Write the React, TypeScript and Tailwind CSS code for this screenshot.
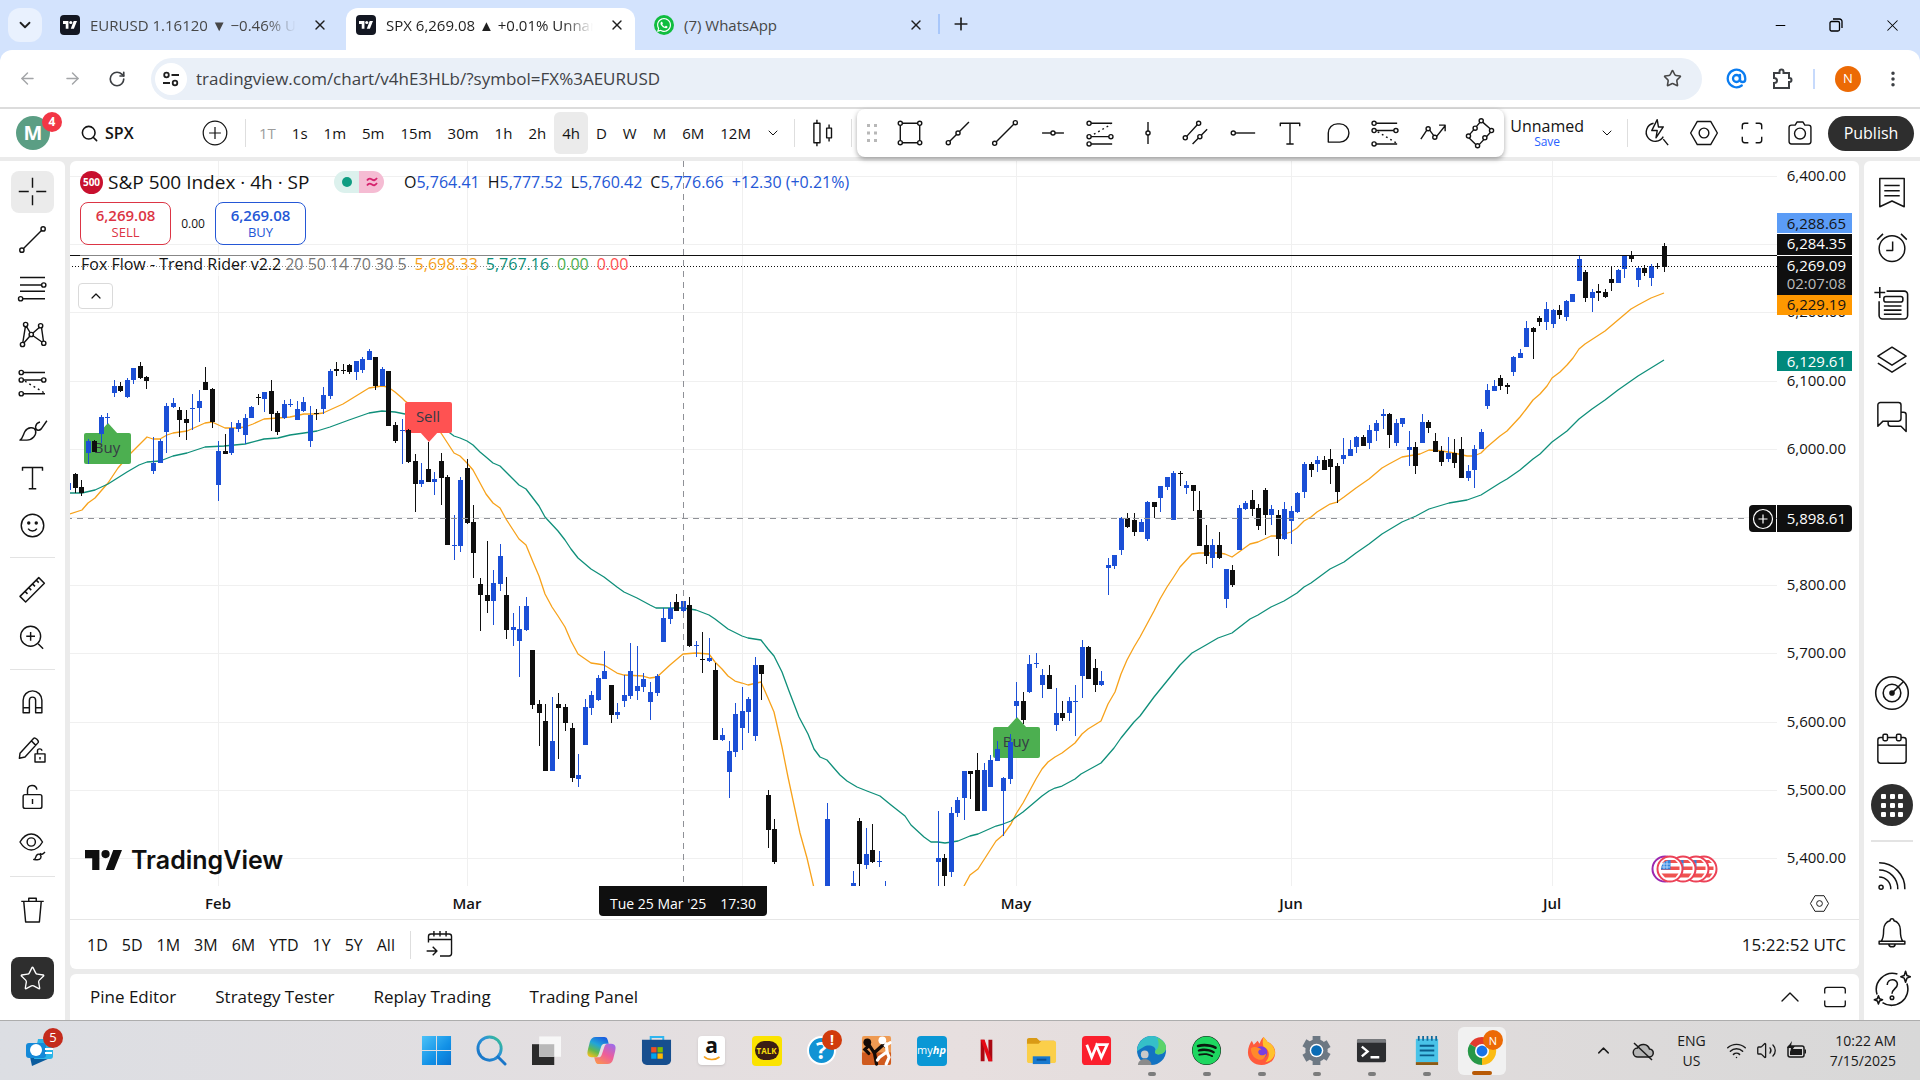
import React from "react";
import {
  ArrowLeft,
  ArrowRight,
  RotateCw,
  X,
  Plus,
  Minus,
  ChevronDown,
  ChevronUp,
  Star,
  AtSign,
  EllipsisVertical,
  Search,
  Wifi,
  Volume2,
} from "lucide-react";
import { FaWhatsapp, FaSpotify } from "react-icons/fa";

type Candle = [high: number, top: number, bottom: number, low: number, up: 0 | 1];

const FIRST_X = 75;
const STEP = 6.54;

/* Candle runs keyed by the index of their first bar. */
const runs: { start: number; bars: Candle[] }[] = [
  {
    start: -1,
    bars: [
      [480, 483, 490, 493, 1], [473, 474, 488, 493, 0], [480, 487, 493, 496, 0], [439, 441, 453, 464, 1],
      [440, 441, 452, 452, 0], [415, 417, 434, 443, 1], [413, 417, 418, 424, 1], [380, 386, 393, 397, 1],
      [382, 386, 391, 392, 0], [378, 380, 397, 398, 1], [368, 368, 380, 384, 1], [362, 366, 378, 379, 0],
      [376, 377, 381, 389, 0], [437, 463, 471, 474, 1], [439, 441, 463, 463, 1], [403, 406, 432, 453, 1],
      [398, 403, 407, 408, 1], [407, 410, 420, 437, 0], [410, 419, 423, 440, 0], [394, 408, 409, 430, 1],
      [390, 401, 408, 422, 1], [367, 382, 390, 390, 0], [388, 389, 422, 428, 0], [441, 451, 485, 501, 1],
      [434, 451, 454, 454, 0], [422, 428, 453, 455, 1], [420, 423, 429, 432, 1], [414, 418, 435, 444, 1],
      [406, 407, 418, 418, 1], [394, 397, 398, 405, 0], [392, 392, 399, 412, 1], [380, 391, 414, 431, 0],
      [411, 413, 432, 435, 0], [400, 404, 418, 419, 1], [399, 404, 405, 407, 1], [401, 409, 420, 420, 1],
      [397, 402, 411, 412, 1], [406, 415, 441, 447, 1], [409, 413, 414, 420, 0], [387, 395, 409, 414, 1],
      [369, 371, 396, 399, 1], [362, 369, 371, 376, 0], [364, 370, 371, 374, 0], [364, 365, 372, 374, 0],
      [361, 361, 372, 380, 1], [357, 359, 370, 373, 1], [349, 351, 360, 360, 1], [357, 357, 386, 390, 0],
      [367, 369, 386, 386, 1], [371, 371, 426, 426, 0], [422, 425, 441, 443, 0], [419, 430, 431, 464, 1],
      [429, 430, 462, 463, 0], [454, 461, 484, 512, 0], [463, 480, 484, 487, 1], [442, 469, 482, 482, 0],
      [472, 479, 482, 495, 1], [453, 461, 478, 505, 0], [475, 477, 545, 545, 0], [515, 545, 546, 560, 1],
      [477, 480, 546, 552, 1], [459, 468, 523, 524, 0], [505, 522, 553, 578, 0], [578, 584, 595, 631, 0],
      [541, 595, 601, 613, 0], [570, 583, 601, 625, 1], [544, 556, 584, 591, 1], [577, 595, 630, 639, 0],
      [613, 627, 630, 646, 1], [606, 629, 641, 677, 1], [597, 606, 630, 631, 1], [650, 650, 705, 709, 0],
      [700, 704, 713, 746, 0], [704, 721, 771, 771, 0], [697, 741, 771, 771, 1], [693, 704, 708, 759, 0],
      [704, 707, 723, 731, 0], [723, 728, 778, 782, 0], [754, 775, 779, 787, 1], [699, 707, 745, 745, 1],
      [691, 695, 708, 715, 1], [675, 678, 700, 701, 1], [651, 671, 679, 679, 1], [685, 685, 715, 723, 0],
      [703, 712, 715, 719, 1], [675, 695, 701, 707, 1], [643, 671, 696, 699, 1], [646, 686, 691, 700, 1],
      [673, 679, 687, 692, 1], [682, 692, 702, 720, 1], [674, 676, 693, 696, 1], [608, 618, 642, 642, 1],
      [602, 608, 619, 624, 1], [594, 602, 611, 611, 0], [601, 601, 611, 612, 1], [597, 605, 646, 647, 0],
      [641, 645, 646, 657, 1], [632, 659, 660, 673, 0], [638, 658, 661, 662, 1], [663, 670, 740, 740, 0],
      [728, 735, 740, 741, 1], [741, 751, 772, 798, 1], [703, 714, 752, 757, 1], [687, 711, 728, 750, 1],
      [697, 699, 712, 733, 1], [657, 665, 736, 741, 1], [665, 665, 674, 700, 0], [790, 795, 830, 848, 0],
      [819, 829, 862, 864, 0],
    ],
  },
  { start: 115, bars: [[803, 819, 890, 890, 1]] },
  {
    start: 119,
    bars: [
      [871, 883, 890, 890, 1], [818, 821, 864, 890, 0], [828, 854, 865, 869, 1], [824, 850, 862, 863, 0],
      [851, 861, 862, 867, 1], [881, 889, 890, 890, 1],
    ],
  },
  {
    start: 132,
    bars: [
      [811, 858, 862, 890, 1], [854, 858, 876, 890, 0], [807, 813, 872, 877, 1], [797, 800, 813, 817, 1],
      [771, 771, 798, 820, 1], [771, 771, 774, 799, 0], [753, 770, 811, 811, 0], [763, 770, 811, 811, 1],
      [755, 760, 787, 787, 1], [741, 749, 761, 761, 1], [777, 778, 791, 836, 1], [734, 742, 779, 784, 1],
      [682, 701, 706, 718, 1], [692, 701, 720, 724, 0], [655, 664, 692, 693, 1], [653, 663, 664, 668, 1],
      [669, 675, 685, 698, 1], [665, 675, 689, 689, 0], [688, 713, 725, 731, 1], [701, 713, 718, 721, 0],
      [697, 701, 713, 721, 1], [685, 701, 702, 736, 1], [640, 647, 676, 698, 1], [646, 647, 679, 679, 0],
      [659, 668, 685, 692, 0], [671, 681, 685, 686, 1], [558, 565, 568, 595, 1], [555, 555, 566, 569, 1],
      [517, 518, 550, 555, 1], [513, 518, 527, 528, 0], [513, 520, 532, 536, 0], [519, 522, 532, 532, 1],
      [501, 502, 539, 541, 1], [502, 502, 507, 518, 0], [486, 486, 498, 512, 1], [477, 477, 487, 490, 1],
      [471, 473, 520, 520, 1], [471, 473, 474, 486, 0], [481, 485, 488, 494, 1], [485, 485, 491, 511, 0],
      [491, 510, 546, 546, 0], [525, 545, 556, 564, 0], [539, 545, 558, 568, 1], [532, 545, 558, 559, 0],
      [569, 569, 599, 608, 1], [565, 570, 585, 587, 0], [505, 508, 550, 550, 1], [501, 503, 509, 510, 1],
      [490, 500, 509, 516, 0], [504, 508, 526, 530, 0], [488, 490, 515, 535, 0], [505, 509, 515, 525, 1],
      [510, 515, 539, 556, 0], [502, 509, 539, 540, 1], [506, 511, 521, 544, 1], [492, 493, 512, 513, 1],
      [462, 464, 492, 498, 1], [462, 464, 470, 477, 0], [456, 460, 464, 472, 1], [456, 460, 470, 470, 0],
      [449, 459, 467, 484, 0], [463, 466, 492, 503, 0], [438, 455, 459, 464, 1], [440, 449, 456, 456, 1],
      [436, 437, 447, 453, 1], [435, 437, 446, 446, 0], [425, 430, 443, 449, 1], [420, 423, 431, 441, 1],
      [409, 414, 416, 429, 1], [413, 414, 435, 448, 0], [419, 423, 443, 446, 1], [418, 418, 424, 427, 1],
      [431, 447, 450, 466, 1], [442, 447, 466, 474, 0], [414, 422, 443, 443, 1], [420, 422, 428, 433, 0],
      [433, 441, 452, 452, 0], [446, 451, 462, 466, 0], [437, 453, 459, 462, 1], [439, 453, 463, 468, 0],
      [437, 449, 478, 478, 0], [465, 471, 478, 481, 1], [445, 449, 470, 488, 1], [429, 432, 449, 449, 1],
      [384, 390, 406, 409, 1], [380, 386, 391, 391, 1], [375, 378, 386, 390, 0], [383, 385, 387, 394, 0],
      [356, 357, 372, 376, 1], [349, 353, 358, 358, 1], [321, 328, 347, 347, 1], [327, 328, 332, 359, 0],
      [316, 318, 322, 326, 0], [302, 309, 322, 330, 1], [309, 310, 324, 328, 1], [305, 310, 315, 319, 0],
      [300, 301, 317, 321, 1], [294, 294, 302, 302, 1], [256, 259, 281, 281, 1], [270, 272, 298, 302, 0],
      [289, 292, 298, 312, 1], [284, 291, 293, 301, 0], [289, 292, 297, 298, 0], [266, 279, 283, 291, 0],
      [269, 270, 283, 283, 1], [255, 256, 269, 278, 1], [251, 256, 259, 262, 0], [267, 268, 280, 287, 1],
      [265, 268, 273, 276, 0], [264, 266, 278, 286, 1], [263, 266, 267, 269, 0], [243, 246, 267, 272, 0],
    ],
  },
];

const fastLine =
  "70,514 82,510 88,503 95,498 101,491 108,483 118,468 131,453 139,445 147,437 153,439 160,439 167,435 173,433 187,431 196,427 205,423 212,422 225,428 237,428 245,427 253,424 264,419 278,418 290,417 304,414 316,414 323,413 343,404 356,396 369,388 382,386 388,387 395,392 402,398 405,401 425,415 441,433 454,453 460,456 467,463 473,470 486,494 493,503 500,508 506,519 519,539 526,545 533,562 539,576 545,594 552,607 558,616 565,627 571,641 578,654 591,663 598,664 604,665 617,673 624,675 643,676 650,678 657,677 670,665 683,654 696,653 709,654 715,662 722,669 728,676 735,681 742,683 748,685 761,682 768,698 774,712 782,747 788,777 800,833 807,858 814,888";
const fastLineReturn =
  "963,888 970,875 978,869 996,841 1003,835 1011,824 1016,814 1023,803 1029,792 1036,779 1042,769 1048,762 1055,757 1062,753 1075,743 1082,734 1088,729 1101,721 1108,704 1115,692 1121,674 1127,660 1134,647 1140,637 1147,624 1154,611 1160,599 1167,587 1173,578 1180,567 1192,554 1199,553 1219,553 1225,554 1232,557 1239,552 1250,544 1258,542 1271,536 1278,536 1291,532 1297,528 1304,521 1311,517 1317,512 1330,504 1337,502 1344,497 1356,488 1369,479 1382,468 1389,464 1402,457 1420,454 1429,450 1442,451 1454,453 1467,456 1474,456 1481,453 1487,447 1500,436 1507,431 1520,417 1527,408 1533,400 1540,394 1547,386 1552,378 1560,372 1567,365 1573,358 1579,349 1585,344 1605,331 1618,320 1631,309 1638,305 1651,298 1664,293";
const slowLine =
  "70,493 82,493 95,490 108,484 127,472 139,465 147,462 160,461 173,456 187,453 205,447 224,446 245,444 264,439 278,438 290,435 304,433 317,431 330,427 349,420 369,413 382,411 395,412 405,414 430,424 450,433 454,436 460,438 467,441 473,445 480,452 486,457 493,463 500,466 513,479 519,485 526,489 539,506 545,517 558,531 565,540 571,549 578,558 591,569 604,577 617,587 624,592 637,598 650,605 656,608 683,608 696,610 709,615 715,619 728,629 742,636 748,638 761,640 768,649 774,656 782,672 789,691 799,717 808,734 814,749 820,757 827,760 833,767 840,775 847,781 857,787 867,791 880,796 891,805 905,816 911,825 924,837 931,842 938,842 945,843 958,841 970,836 978,834 996,826 1003,824 1011,821 1016,817 1023,812 1029,807 1042,796 1049,791 1055,788 1062,786 1075,779 1081,774 1101,763 1114,748 1121,738 1134,722 1140,716 1154,697 1167,681 1180,665 1192,653 1206,645 1218,638 1232,633 1250,619 1258,615 1271,607 1284,601 1297,593 1304,587 1311,583 1330,569 1344,562 1356,553 1369,544 1382,534 1402,522 1416,516 1429,509 1449,503 1467,500 1481,495 1500,483 1507,479 1520,470 1533,459 1540,454 1552,442 1567,431 1579,419 1592,409 1605,400 1618,390 1638,376 1651,368 1664,360";

const gridX = [218, 467, 742, 1016, 1291, 1552];
const prices = [6400, 6300, 6200, 6100, 6000, 5900, 5800, 5700, 5600, 5500, 5400];
const priceY = (p: number) => Math.round(176 + (6400 - p) * 0.682);

function Signal({ x, y, text, up }: { x: number; y: number; text: string; up: boolean }) {
  const top = up ? y + 10 : y - 40;
  return (
    <g>
      <rect x={x - 24} y={top} width={47} height={31} rx={2} fill={up ? "#4caf50" : "#ff5252"} />
      <path
        d={up ? `M${x} ${y} l10 11 h-20 z` : `M${x} ${y} l10 -11 h-20 z`}
        fill={up ? "#4caf50" : "#ff5252"}
      />
      <text x={x - 1} y={top + 20} textAnchor="middle" fontSize={15} fill="#363a45">
        {text}
      </text>
    </g>
  );
}

function Chart() {
  return (
    <svg
      viewBox="70 161 1707 725"
      preserveAspectRatio="xMaxYMin slice"
      className="block h-full w-full"
      role="img"
      aria-label="S&P 500 Index candles"
    >
      <g stroke="#f0f0f0" shapeRendering="crispEdges">
        {gridX.map((x) => (
          <line key={x} x1={x + 0.5} x2={x + 0.5} y1={161} y2={886} />
        ))}
        {prices.map((p) => (
          <line key={p} x1={0} x2={1777} y1={priceY(p) + 0.5} y2={priceY(p) + 0.5} />
        ))}
      </g>
      <g fill="none" strokeWidth={1.3} strokeLinejoin="round">
        <polyline points={fastLine} stroke="#f7a21b" />
        <polyline points={fastLineReturn} stroke="#f7a21b" />
        <polyline points={slowLine} stroke="#0f8f7a" />
      </g>
      <Signal x={108} y={423} text="Buy" up />
      <Signal x={429} y={442} text="Sell" up={false} />
      <Signal x={1017} y={717} text="Buy" up />
      <g shapeRendering="crispEdges">
        {runs.map((run) =>
          run.bars.map(([h, t, b, l, up], k) => {
            const x = Math.floor(FIRST_X + STEP * (run.start + k));
            const c = up ? "#1b4fd6" : "#0f0f0f";
            return (
              <g key={run.start + k} fill={c}>
                <rect x={x} y={h} width={1} height={Math.max(1, l - h)} />
                <rect x={x - 2} y={t} width={5} height={Math.max(1, b - t)} />
              </g>
            );
          }),
        )}
      </g>
      <g shapeRendering="crispEdges" stroke="#0f0f0f">
        <line x1={0} x2={1777} y1={255.5} y2={255.5} />
        <line x1={0} x2={1777} y1={266.5} y2={266.5} strokeDasharray="1 2" />
        <line x1={683.5} x2={683.5} y1={161} y2={886} stroke="#8f9197" strokeDasharray="6 5" />
        <line x1={0} x2={1777} y1={518.5} y2={518.5} stroke="#8f9197" strokeDasharray="6 5" />
      </g>
    </svg>
  );
}

/* Thin-stroke icon on a 28-unit grid. */
function Icon({ size = 34, children }: { size?: number; children: React.ReactNode }) {
  return (
    <svg
      width={size}
      height={size}
      viewBox="0 0 28 28"
      fill="none"
      stroke="#131313"
      strokeWidth={1.15}
      strokeLinejoin="round"
      className="shrink-0"
      aria-hidden="true"
    >
      {children}
    </svg>
  );
}

const Dot = ({ x, y }: { x: number; y: number }) => <circle cx={x} cy={y} r={1.7} fill="#fff" />;

const trend = (
  <>
    <path d="M6 22 22 6" />
    <Dot x={5.5} y={22.5} />
    <Dot x={22.5} y={5.5} />
  </>
);
const fibo = (
  <>
    <path d="M4 6h20M4 12h20M4 17h20M4 23h20" />
    <Dot x={23} y={12} />
    <Dot x={4.5} y={23} />
  </>
);
const pattern = (
  <>
    <path d="M6 22 8.5 6.5 13 14 21 7 23 21 13 14 6 22" />
    <Dot x={6} y={22} />
    <Dot x={8.5} y={6} />
    <Dot x={13} y={14} />
    <Dot x={20.5} y={7} />
    <Dot x={23} y={21} />
  </>
);
const position = (
  <>
    <path d="M6 6h18M6 12h17M6 23h18" />
    <path d="M8 13 23 22" strokeDasharray="1.5 2.5" />
    <Dot x={5} y={6} />
    <Dot x={5} y={12} />
    <Dot x={23} y={12} />
    <Dot x={5} y={23} />
  </>
);
const positionUp = (
  <>
    <path d="M6 6h18M6 17h17M6 23h18" />
    <path d="M9 15 23 7" strokeDasharray="1.5 2.5" />
    <Dot x={5} y={6} />
    <Dot x={5} y={17} />
    <Dot x={23} y={17} />
    <Dot x={5} y={23} />
  </>
);
const textTool = <path d="M6 8.5V6h16v2.5M14 6v17M11 23h6" />;

const leftGroups: { height: string; tools: { name: string; icon: React.ReactNode }[] }[] = [
  {
    height: "h-[381px]",
    tools: [
      { name: "Cross", icon: <path d="M14 3v8M14 17v8M3 14h8M17 14h8" /> },
      { name: "Trend line", icon: trend },
      { name: "Fib retracement", icon: fibo },
      { name: "XABCD pattern", icon: pattern },
      { name: "Long position", icon: position },
      {
        name: "Brush",
        icon: (
          <path d="M4 22.500c2.500-1.500 2.500-4.500 4-7 2-3.500 7.500-4 8.500-.5.8 3.500-2.500 7.500-7 7.500zM16.500 11.500c-.5 3 2.500 4 4.500 2L25.500 7M16.500 11.500c.3-1.500 1.500-3 3.500-3.500" />
        ),
      },
      { name: "Text", icon: textTool },
      {
        name: "Icon",
        icon: (
          <>
            <circle cx={14} cy={14} r={9} />
            <circle cx={11} cy={12} r={0.8} fill="#131313" />
            <circle cx={17} cy={12} r={0.8} fill="#131313" />
            <path d="M10.5 16.500c1.500 2.500 5.500 2.500 7 0" />
          </>
        ),
      },
    ],
  },
  {
    height: "h-[95px]",
    tools: [
      {
        name: "Measure",
        icon: <path d="m4 19.500 15-15 4.500 4.500-15 15zM8 15.500l2 2M11 12.500l2 2M14 9.500l2 2M17 6.500l2 2" />,
      },
      {
        name: "Zoom in",
        icon: (
          <>
            <circle cx={12.5} cy={13} r={8} />
            <path d="M12.500 9.500v7M9 13h7M18.500 19l4 4" />
          </>
        ),
      },
    ],
  },
  {
    height: "h-[190px]",
    tools: [
      {
        name: "Magnet",
        icon: <path d="M6.500 23V13a7.500 7.500 0 0 1 15 0v10h-5V13a2.500 2.500 0 0 0-5 0v10zM6.500 19h5M16.500 19h5" />,
      },
      {
        name: "Keep drawing",
        icon: (
          <path d="m4 17 11-12c1-1 4.500 2 3.500 3.500L8 20l-4.500 1zM13 7l3.500 3.500M16 17.500h8V24h-8zM18 17.500V15c0-2 3.500-2 3.500 0M20 20v2" />
        ),
      },
      {
        name: "Lock",
        icon: (
          <>
            <rect x={6.5} y={12.5} width={15} height={11} rx={1.5} />
            <path d="M10 12.500V9c0-5 7-5 7.500-.5M14 16v4" />
          </>
        ),
      },
      {
        name: "Hide",
        icon: (
          <>
            <path d="M4 12c5-8.500 13-8.500 18 0-5 8.500-13 8.500-18 0Z" />
            <circle cx={13} cy={12} r={3.3} />
            <path d="M15 26c2 0 1-3 3-4s3.500 1 2.500 3-3 1-5.500 1ZM20 21c1 1.500 2 1 4-1" />
          </>
        ),
      },
    ],
  },
  {
    height: "h-12",
    tools: [
      {
        name: "Remove",
        icon: <path d="M5 7.500h18M11 7.500V5h6v2.500M7 7.500 8.500 24h11L21 7.500" />,
      },
    ],
  },
];

const drawTools: { name: string; icon: React.ReactNode }[] = [
  {
    name: "Rectangle",
    icon: (
      <>
        <path d="M6 6h16v16H6z" />
        <Dot x={6} y={6} />
        <Dot x={22} y={6} />
        <Dot x={6} y={22} />
        <Dot x={22} y={22} />
      </>
    ),
  },
  {
    name: "Ray",
    icon: (
      <>
        <path d="M6 22 23 5" />
        <Dot x={6} y={22} />
        <Dot x={14} y={14} />
      </>
    ),
  },
  { name: "Line", icon: trend },
  {
    name: "Horizontal line",
    icon: (
      <>
        <path d="M5 14h18" />
        <Dot x={14} y={14} />
      </>
    ),
  },
  { name: "Short position", icon: positionUp },
  {
    name: "Vertical line",
    icon: (
      <>
        <path d="M14 5v18" />
        <Dot x={14} y={14} />
      </>
    ),
  },
  {
    name: "Parallel channel",
    icon: (
      <>
        <path d="M6 18 17 6M12 23 24 11" />
        <Dot x={6} y={18} />
        <Dot x={17} y={6} />
        <Dot x={18} y={17} />
      </>
    ),
  },
  {
    name: "Horizontal ray",
    icon: (
      <>
        <path d="M6 14h18" />
        <Dot x={6} y={14} />
      </>
    ),
  },
  { name: "Text", icon: textTool },
  {
    name: "Callout",
    icon: <path d="M6 21.500V14a7.500 7.500 0 0 1 7.500-7.500h2a7.500 7.500 0 0 1 0 15z" />,
  },
  { name: "Long position", icon: position },
  {
    name: "Path",
    icon: (
      <>
        <path d="m4 19 6-9 6 8 8-10M19 7.500h5v5" />
        <Dot x={10} y={10.5} />
        <Dot x={15.5} y={17.5} />
      </>
    ),
  },
  {
    name: "Rotated rectangle",
    icon: (
      <>
        <path d="M15 4 24 12 12 25 4 17z" />
        <Dot x={15} y={4} />
        <Dot x={23.5} y={12} />
        <Dot x={12} y={24.5} />
        <Dot x={4.5} y={16.5} />
        <Dot x={10} y={10} />
        <Dot x={18} y={18} />
      </>
    ),
  },
];

function TvMark({ className, light }: { className: string; light?: boolean }) {
  return (
    <svg viewBox="0 0 36 20" className={className} fill={light ? "#fff" : "#0f0f0f"} aria-hidden="true">
      <path d="M14 20H7V8H0V0h14zM28 20h-8l7.500-20H36z" />
      <circle cx={20} cy={4} r={4} />
    </svg>
  );
}

function Tab({ active, icon, title, fade }: { active?: boolean; icon: React.ReactNode; title: string; fade?: boolean }) {
  return (
    <div
      className={`flex h-[42px] items-center pb-2 pl-[10px] ${
        active ? "w-[289px] rounded-t-xl bg-white pr-2" : fade ? "w-[296px] pr-4" : "w-[290px] pr-2"
      }`}
    >
      {icon}
      <span
        className={`ml-[10px] min-w-0 flex-1 overflow-hidden whitespace-nowrap text-[15px] ${
          active ? "text-[#1f1f1f]" : "text-[#474747]"
        } ${fade ? "[mask-image:linear-gradient(to_right,black_85%,transparent)]" : ""}`}
      >
        {title}
      </span>
      <button aria-label={`Close ${title}`} className="ml-[14px] p-0.5">
        <X size={16} strokeWidth={2} color="#1f1f1f" />
      </button>
    </div>
  );
}

const TvFavicon = () => (
  <span className="grid h-5 w-5 shrink-0 place-items-center rounded bg-[#131722]">
    <TvMark light className="w-[14px]" />
  </span>
);

function BrowserChrome() {
  return (
    <header className="font-['Open_Sans','Noto_Sans',sans-serif]">
      <div className="flex h-[50px] items-end bg-[#d3e3fd]">
        <button
          aria-label="Search tabs"
          className="mb-2 ml-2 grid h-[34px] w-[34px] place-items-center rounded-xl bg-[#e9f1fe]"
        >
          <ChevronDown size={18} strokeWidth={2.4} color="#1f1f1f" />
        </button>
        <div className="ml-2 flex">
          <Tab fade icon={<TvFavicon />} title="EURUSD 1.16120 ▼ −0.46% Unnamed" />
          <Tab active fade icon={<TvFavicon />} title="SPX 6,269.08 ▲ +0.01% Unnamed" />
          <div className="ml-[9px]">
            <Tab
              icon={
                <span className="grid h-5 w-5 place-items-center rounded-full bg-[#10bd3f]">
                  <FaWhatsapp size={16} color="#fff" />
                </span>
              }
              title="(7) WhatsApp"
            />
          </div>
        </div>
        <span className="mb-4 ml-1 h-5 w-0.5 bg-[#a8c7fa]" />
        <button aria-label="New tab" className="mb-4 ml-[11px]">
          <Plus size={20} color="#1f1f1f" />
        </button>
        <div className="ml-auto flex h-full items-center">
          <button aria-label="Minimize" className="grid w-14 place-items-center">
            <Minus size={15} strokeWidth={1.6} color="#000" />
          </button>
          <button aria-label="Restore" className="grid w-14 place-items-center">
            <svg width="14" height="14" viewBox="0 0 14 14" fill="none" stroke="#000" strokeWidth="1.3">
              <rect x="1" y="3.5" width="9.5" height="9.5" rx="1.5" />
              <path d="M4 1h6.500A2.500 2.500 0 0 1 13 3.500V10" />
            </svg>
          </button>
          <button aria-label="Close window" className="grid w-14 place-items-center">
            <X size={19} strokeWidth={1.3} color="#000" />
          </button>
        </div>
      </div>
      <div className="bg-[#d3e3fd]">
        <div className="flex h-[59px] items-center rounded-t-xl border-b-2 border-[#dcdcdc] bg-white">
          <button aria-label="Back" className="ml-[18px]">
            <ArrowLeft size={19} strokeWidth={1.8} color="#a3a5a8" />
          </button>
          <button aria-label="Forward" className="ml-[26px]">
            <ArrowRight size={19} strokeWidth={1.8} color="#a3a5a8" />
          </button>
          <button aria-label="Reload" className="ml-[26px]">
            <RotateCw size={18} strokeWidth={2.2} color="#3c3f43" />
          </button>
          <div className="ml-[25px] flex h-[42px] flex-1 items-center rounded-full bg-[#eaf0f8] pl-1 pr-5">
            <button aria-label="Site information" className="grid h-8 w-8 place-items-center rounded-full bg-white">
              <svg width="18" height="18" viewBox="0 0 18 18" fill="none" stroke="#1f1f1f" strokeWidth="1.8">
                <circle cx="4.5" cy="5" r="2.3" />
                <path d="M9.500 5H17M1 13h7" />
                <circle cx="13" cy="13" r="2.3" />
              </svg>
            </button>
            <input
              aria-label="Address"
              className="ml-[9px] flex-1 bg-transparent text-[17px] text-[#3f4246] outline-none"
              defaultValue="tradingview.com/chart/v4hE3HLb/?symbol=FX%3AEURUSD"
            />
            <button aria-label="Bookmark">
              <Star size={19} strokeWidth={2} color="#474747" />
            </button>
          </div>
          <button aria-label="Mail" className="ml-6">
            <AtSign size={21} strokeWidth={2.6} color="#0a7cf0" />
          </button>
          <button aria-label="Extensions" className="ml-6">
            <svg width="22" height="22" viewBox="0 0 22 22" fill="none" stroke="#3c3f43" strokeWidth="2">
              <path d="M3 5h5.500V3.500a2 2 0 0 1 4 0V5H18v5h.5a2 2 0 0 1 0 4H18v6H3v-5c4 0 4-5 0-5z" />
            </svg>
          </button>
          <span className="ml-[20px] h-5 w-0.5 bg-[#c7dafc]" />
          <button
            aria-label="Profile"
            className="ml-5 grid h-[26px] w-[26px] place-items-center rounded-full bg-[#ec6a05] text-[13px] text-white"
          >
            N
          </button>
          <button aria-label="Menu" className="ml-[22px] mr-[17px]">
            <EllipsisVertical size={20} strokeWidth={2.2} color="#3c3f43" />
          </button>
        </div>
      </div>
    </header>
  );
}

const Sep = () => <span className="h-7 w-px shrink-0 bg-[#dedede]" />;

const intervals = ["1T", "1s", "1m", "5m", "15m", "30m", "1h", "2h", "4h", "D", "W", "M", "6M", "12M"];

function TopToolbar() {
  return (
    <div className="flex h-12 items-center bg-white text-[#131313]">
      <button
        aria-label="Account menu, 4 notifications"
        className="relative ml-4 grid h-[34px] w-[34px] shrink-0 place-items-center rounded-full bg-[#5b9e84] text-[20px] font-bold text-white"
      >
        M
        <span className="absolute -top-1 left-[26px] grid h-5 w-5 place-items-center rounded-full bg-[#f23645] text-[12px]">
          4
        </span>
      </button>
      <button className="ml-[30px] flex w-[118px] items-center gap-1.5 text-[16px] font-semibold">
        <Search size={19} strokeWidth={2} />
        SPX
      </button>
      <button aria-label="Compare" className="ml-0.5">
        <Icon size={30}>
          <circle cx={14} cy={14} r={11} />
          <path d="M14 8.500v11M8.500 14h11" />
        </Icon>
      </button>
      <span className="w-[15px]" />
      <Sep />
      <div className="ml-[5px] flex text-[15px] font-medium">
        {intervals.map((t) => (
          <button
            key={t}
            className={`h-[42px] rounded-md px-2 ${t === "4h" ? "bg-[#ebebeb]" : ""} ${
              t === "1T" ? "text-[#9c9c9c]" : ""
            }`}
          >
            {t}
          </button>
        ))}
      </div>
      <button aria-label="More intervals" className="ml-1.5">
        <ChevronDown size={16} strokeWidth={1.5} />
      </button>
      <span className="w-[13px]" />
      <Sep />
      <button aria-label="Candle style" className="mx-[11px]">
        <Icon>
          <path d="M9 3v3M9 22v3M6.500 6h5v16h-5zM19 7v3M19 18v3M17 10h4v8h-4z" />
        </Icon>
      </button>
      <Sep />
      <div className="z-10 ml-auto flex h-12 w-[647px] shrink-0 items-center rounded-lg bg-white shadow-[0_2px_5px_rgba(0,0,0,0.35)]">
        <span className="flex w-[29px] justify-center" aria-hidden="true">
          <svg width="10" height="20" viewBox="0 0 10 20" fill="#b8b8b8">
            <path d="M0 1h3v3H0zM7 1h3v3H7zM0 8.500h3v3H0zM7 8.500h3v3H7zM0 16h3v3H0zM7 16h3v3H7z" />
          </svg>
        </span>
        {drawTools.map((t) => (
          <button key={t.name} aria-label={t.name} className="grid min-w-0 flex-1 place-items-center">
            <Icon>{t.icon}</Icon>
          </button>
        ))}
      </div>
      <div className="ml-[6px] flex shrink-0 items-center">
        <button className="flex flex-col items-center">
          <span className="text-[16px] font-medium leading-[17px]">Unnamed</span>
          <span className="text-[12px] leading-[14px] text-[#2962ff]">Save</span>
        </button>
        <button aria-label="Manage layouts" className="ml-[15px] mr-3">
          <ChevronDown size={16} strokeWidth={1.5} />
        </button>
        <Sep />
        <div className="ml-1 mr-1 flex">
          <button aria-label="Quick search" className="grid w-12 place-items-center">
            <Icon>
              <path d="M12 6a7.500 7.500 0 1 0 8 11M20 19l4 5M15 3l-4.500 9H15l-1 6 6-9h-4z" />
            </Icon>
          </button>
          <button aria-label="Settings" className="grid w-12 place-items-center">
            <Icon>
              <path d="M8.500 4.500h11L25 14l-5.500 9.500h-11L3 14z" />
              <circle cx={14} cy={14} r={4} />
            </Icon>
          </button>
          <button aria-label="Fullscreen" className="grid w-12 place-items-center">
            <Icon>
              <path d="M6 11V8c0-1.500.5-2 2-2h3M17 6h3c1.500 0 2 .5 2 2v3M22 17v3c0 1.500-.5 2-2 2h-3M11 22H8c-1.500 0-2-.5-2-2v-3" />
            </Icon>
          </button>
          <button aria-label="Snapshot" className="grid w-12 place-items-center">
            <Icon>
              <path d="M7 7.500h3L11.500 5h5L18 7.500h3a2 2 0 0 1 2 2V21a2 2 0 0 1-2 2H7a2 2 0 0 1-2-2V9.500a2 2 0 0 1 2-2Z" />
              <circle cx={14} cy={14.5} r={4.5} />
            </Icon>
          </button>
        </div>
        <button className="mr-1.5 h-[35px] w-[86px] rounded-full bg-[#2e2e2e] text-[16px] font-medium text-white">
          Publish
        </button>
      </div>
    </div>
  );
}

function LeftToolbar() {
  return (
    <nav aria-label="Drawing tools" className="flex w-[65px] flex-col items-center rounded-tr-md bg-white pt-[7px]">
      {leftGroups.map((g, gi) => (
        <React.Fragment key={g.height}>
          {gi > 0 && <hr className="my-[8px] w-[45px] border-[#e3e3e3]" />}
          <div className={`flex flex-col justify-around ${g.height}`}>
            {g.tools.map((t) => (
              <button
                key={t.name}
                aria-label={t.name}
                className={`grid h-[42px] w-[43px] place-items-center rounded-lg ${t.name === "Cross" ? "bg-[#ebebeb]" : ""}`}
              >
                <Icon size={35}>{t.icon}</Icon>
              </button>
            ))}
          </div>
        </React.Fragment>
      ))}
      <button
        aria-label="Favorite tools"
        className="mb-[21px] mt-auto grid h-[42px] w-[43px] place-items-center rounded-lg bg-[#2e2e2e]"
      >
        <Star size={27} strokeWidth={1.2} color="#fff" />
      </button>
    </nav>
  );
}

function RightToolbar() {
  const cell = "grid h-14 w-full shrink-0 place-items-center";
  return (
    <nav aria-label="Widgets" className="flex w-14 flex-col items-center rounded-tl-md bg-white pb-[3px] pt-[3px]">
      <button aria-label="Watchlist" className={cell}>
        <Icon size={36}>
          <path d="M4.500 3.500h19v22L14 21l-9.500 4.500zM8 9h12M8 13h12M8 17h12" />
        </Icon>
      </button>
      <button aria-label="Alerts" className={cell}>
        <Icon size={36}>
          <circle cx={14} cy={14.5} r={10} />
          <path d="M14.500 9v7H9.500M2.500 7.500 7 3M25.500 7.500 21 3" />
        </Icon>
      </button>
      <button aria-label="Data window" className={cell}>
        <Icon size={38}>
          <path d="M10 4.500h13a2.500 2.500 0 0 1 2.500 2.500v15.500a2.500 2.500 0 0 1-2.500 2.500H7a2.500 2.500 0 0 1-2.500-2.500V12M1 5.500h8M5 1.500v8M8 15.500h13M8 18.500h13M8 21.500h13" />
          <rect x={8} y={8.5} width={14} height={4} rx={1.5} />
        </Icon>
      </button>
      <button aria-label="Object tree" className={cell}>
        <Icon size={36}>
          <path d="m14 4 11 7-11 7-11-7zM3 16.500l11 7 11-7" />
        </Icon>
      </button>
      <button aria-label="Chats" className={cell}>
        <Icon size={36}>
          <path d="M5 3.500h14a2 2 0 0 1 2 2V16a2 2 0 0 1-2 2H7l-4 4V5.500a2 2 0 0 1 2-2ZM21 11h2a2 2 0 0 1 2 2v13l-4-4h-8a2 2 0 0 1-2-2v-2" />
        </Icon>
      </button>
      <span className="flex-1" />
      <button aria-label="Screener" className={cell}>
        <Icon size={38}>
          <circle cx={14} cy={14} r={12} />
          <circle cx={14} cy={14} r={6.5} />
          <circle cx={14} cy={14} r={1.5} fill="#131313" />
          <path d="M14 14 22.500 5.500" />
        </Icon>
      </button>
      <button aria-label="Calendar" className={cell}>
        <Icon size={36}>
          <rect x={3} y={5} width={22} height={20} rx={2} />
          <path d="M3 11h22" />
          <rect x={7} y={2.5} width={3.5} height={5} rx={1} fill="#fff" />
          <rect x={17.5} y={2.5} width={3.5} height={5} rx={1} fill="#fff" />
        </Icon>
      </button>
      <button aria-label="Products" className={cell}>
        <span className="grid h-[42px] w-[42px] grid-cols-3 place-content-center gap-1 rounded-full bg-[#2e2e2e] px-[10px]">
          {Array.from({ length: 9 }, (_, k) => (
            <i key={k} className="h-[5px] w-[5px] rounded-[1px] bg-white" />
          ))}
        </span>
      </button>
      <hr className="my-[7px] w-[42px] border-t-2 border-[#e3e3e3]" />
      <button aria-label="Streams" className={cell}>
        <Icon size={36}>
          <circle cx={5.5} cy={22} r={1.6} />
          <path d="M4 14a9 9 0 0 1 9 9.500M4 8.500a14.500 14.500 0 0 1 14.500 15M4 3a20 20 0 0 1 20 20.500" />
        </Icon>
      </button>
      <button aria-label="Notifications" className={cell}>
        <Icon size={36}>
          <path d="M5.500 20.500c2-2 2-5 2-9 0-3.500 2-6.500 5-7 0-2 3-2 3 0 3 .5 5 3.500 5 7 0 4 0 7 2 9zM4 20.500h20v2H4zM11.500 22.500c0 3 5 3 5 0" />
        </Icon>
      </button>
      <button aria-label="Help" className={cell}>
        <Icon size={38}>
          <path d="M18 3A12 12 0 0 0 3 18M7 24A12 12 0 0 0 25 10M10.500 11c0-5 7.500-5 7.500-.5 0 3-4 3.500-4 7M24 1l1 3 2.500 1-2.500 1-1 3-1-3-2.500-1 2.500-1zM4 19l.8 2.200 2.200.8-2.200.8L4 25l-.8-2.200L1 22l2.200-.8z" />
          <circle cx={14} cy={20.5} r={1.3} />
        </Icon>
      </button>
    </nav>
  );
}

function Legend() {
  return (
    <div className="absolute left-2 top-2 flex flex-col items-start text-[16px] text-[#131313]">
      <div className="ml-0.5 flex h-[26px] items-center">
        <span className="grid h-[23px] w-[23px] place-items-center rounded-full bg-[#c8102e] text-[10px] font-bold text-white">
          500
        </span>
        <h1 className="ml-[5px] w-[226px] whitespace-nowrap text-[19px]">S&amp;P 500 Index · 4h · SP</h1>
        <span className="flex h-[22px] w-[50px] overflow-hidden rounded-full">
          <span className="grid w-1/2 place-items-center bg-[#dcf1ed]">
            <i className="h-2.5 w-2.5 rounded-full bg-[#0f9d82]" />
          </span>
          <span className="grid w-1/2 place-items-center bg-[#f5bcd3]">
            <svg width="12" height="10" viewBox="0 0 12 10" fill="none" stroke="#d6246e" strokeWidth="1.8">
              <path d="M1 3.500c2-3 3.500-2 5-1s3 1.500 5-1.500M1 8.500c2-3 3.500-2 5-1s3 1.500 5-1.500" />
            </svg>
          </span>
        </span>
        <p className="ml-5 flex gap-2 whitespace-nowrap">
          {[
            ["O", "5,764.41"],
            ["H", "5,777.52"],
            ["L", "5,760.42"],
            ["C", "5,776.66"],
          ].map(([k, v]) => (
            <span key={k}>
              {k}
              <span className="text-[#2457d6]">{v}</span>
            </span>
          ))}
          <span className="text-[#2457d6]">+12.30 (+0.21%)</span>
        </p>
      </div>
      <div className="ml-0.5 mt-[7px] flex items-center">
        <button className="h-[43px] w-[91px] rounded-lg border border-[#dc3545] bg-white text-[#dc3545]">
          <span className="block text-[15px] font-semibold leading-[17px]">6,269.08</span>
          <span className="block text-[13px] leading-[17px]">SELL</span>
        </button>
        <span className="w-[44px] text-center text-[12px]">0.00</span>
        <button className="h-[43px] w-[91px] rounded-lg border border-[#2457d6] bg-white text-[#2457d6]">
          <span className="block text-[15px] font-semibold leading-[17px]">6,269.08</span>
          <span className="block text-[13px] leading-[17px]">BUY</span>
        </button>
      </div>
      <p className="ml-0.5 mt-[7px] flex h-6 items-center whitespace-nowrap bg-white/50 px-px">
        <span>Fox Flow - Trend Rider v2.2</span>
        <span className="ml-1 text-[#787878]">20 50 14 70 30 5</span>
        <span className="ml-2 text-[#f7a21b]">5,698.33</span>
        <span className="ml-2 text-[#0f8f7a]">5,767.16</span>
        <span className="ml-2 text-[#4caf50]">0.00</span>
        <span className="ml-2 text-[#ff5252]">0.00</span>
      </p>
      <button
        aria-label="Collapse legend"
        className="mt-[7px] grid h-[26px] w-[35px] place-items-center rounded border border-[#dadada] bg-white"
      >
        <ChevronUp size={16} strokeWidth={1.8} />
      </button>
    </div>
  );
}

const tag = "absolute left-0 flex w-[75px] px-1.5 text-[15px] font-medium";

function PriceAxis() {
  return (
    <div className="relative w-[82px] shrink-0 text-[15px] text-[#131313]">
      {prices
        .filter((p) => p !== 6300 && p !== 5900)
        .map((p) => (
          <span key={p} className="absolute right-[13px] leading-5" style={{ top: priceY(p) - 172 }}>
            {p.toLocaleString("en-US", { minimumFractionDigits: 2 })}
          </span>
        ))}
      <span className={`${tag} top-[52px] justify-end bg-[#5b9cf6] leading-[20px]`}>6,288.65</span>
      <span className={`${tag} top-[73px] h-[21px] justify-end bg-[#0f0f0f] leading-[19px] text-white`}>6,284.35</span>
      <span className={`${tag} top-[95px] h-[40px] flex-col items-end bg-[#0f0f0f] leading-[19px] text-white`}>
        6,269.09
        <span className="font-normal leading-[17px] text-[#bdbdbd]">02:07:08</span>
      </span>
      <span className={`${tag} top-[134px] h-5 justify-end bg-[#ff9800] leading-[19px]`}>6,229.19</span>
      <span className={`${tag} top-[190px] justify-end bg-[#00897b] leading-[20px] text-white`}>6,129.61</span>
      <span className={`${tag} top-[344px] justify-end rounded-r-sm bg-[#0f0f0f] leading-[27px] text-white`}>
        5,898.61
      </span>
      <button
        aria-label="Add at price"
        className="absolute -left-7 top-[344px] grid h-[27px] w-[27px] place-items-center rounded-l-sm bg-[#0f0f0f]"
      >
        <svg width="22" height="22" viewBox="0 0 22 22" fill="none" stroke="#fff" strokeWidth="1.2">
          <circle cx="11" cy="11" r="9.5" />
          <path d="M11 6.500v9M6.500 11h9" />
        </svg>
      </button>
    </div>
  );
}

/* Stack of US event markers with an earnings ring behind. */
function EventFlags() {
  return (
    <svg width="68" height="28" viewBox="0 0 68 28" className="absolute bottom-[3px] right-[58px]" aria-hidden="true">
      <circle cx="14" cy="14" r="12.5" fill="#fff" stroke="#9c27b0" strokeWidth="2" />
      {[53, 45, 32, 19].map((x) => (
        <g key={x} transform={`translate(${x - 13} 1)`}>
          <circle cx="13" cy="13" r="12.5" fill="#fff" stroke="#ec4257" strokeWidth="2" />
          <path d="M4 10.500h18.500v3.500H4zM4.500 17.500h17l-3 4H8zM8 4h10l3 3H5z" fill="#ef5350" />
          <path d="M13.500 4v9.500H4C4 8 8 4 13.500 4Z" fill="#2f86e0" />
          <path d="M7 6v7M10 5v8M5 8h8M4 11h9" stroke="#cfe3fb" strokeWidth="0.8" />
        </g>
      ))}
    </svg>
  );
}

const months: { x: number; name: string }[] = [
  { x: 218, name: "Feb" },
  { x: 467, name: "Mar" },
  { x: 1016, name: "May" },
  { x: 1291, name: "Jun" },
  { x: 1552, name: "Jul" },
];

function ChartPanel() {
  return (
    <section className="flex min-h-0 flex-1 flex-col rounded-md bg-white">
      <div className="flex min-h-0 flex-1">
        <div className="relative min-w-0 flex-1 overflow-hidden">
          <Chart />
          <Legend />
          <div className="absolute bottom-[10px] left-[15px] flex items-center gap-[9px]">
            <TvMark className="w-[37px]" />
            <span className="font-['Inter',sans-serif] text-[25px] font-semibold leading-8 text-[#0f0f0f]">
              TradingView
            </span>
          </div>
          <EventFlags />
        </div>
        <PriceAxis />
      </div>
      <div className="relative h-[34px] shrink-0 border-b border-[#e6e6e6] text-[15px] font-semibold text-[#131313]">
        {months.map((m) => (
          <span
            key={m.name}
            className="absolute top-[7px] -translate-x-1/2 leading-5"
            style={{ left: `${((m.x - 70) / 1789) * 100}%` }}
          >
            {m.name}
          </span>
        ))}
        <span className="absolute left-[529px] top-0 flex h-[30px] w-[168px] items-center justify-center gap-[14px] whitespace-nowrap rounded-b-sm bg-[#0f0f0f] pt-1 text-[14px] font-medium text-white">
          <span>Tue 25 Mar '25</span>
          <span>17:30</span>
        </span>
        <button aria-label="Scale settings" className="absolute right-7 top-1.5">
          <Icon size={23}>
            <path d="M8.500 4.500h11L25 14l-5.500 9.500h-11L3 14z" />
            <circle cx={14} cy={14} r={3.5} />
          </Icon>
        </button>
      </div>
      <div className="flex h-[49px] shrink-0 items-center text-[16px] text-[#131313]">
        <div className="ml-[10px] flex font-medium">
          {["1D", "5D", "1M", "3M", "6M", "YTD", "1Y", "5Y", "All"].map((r) => (
            <button key={r} className="px-[7px]">
              {r}
            </button>
          ))}
        </div>
        <span className="w-2" />
        <Sep />
        <button aria-label="Go to date" className="ml-3">
          <Icon>
            <path d="M4.500 12V7a2 2 0 0 1 2-2h15a2 2 0 0 1 2 2v14a2 2 0 0 1-2 2H14M4.500 9.500h19M9 2.500V7M14 2.500V7M19 2.500V7M3 19h8M8 15.500l3.500 3.500L8 22.500" />
          </Icon>
        </button>
        <button className="ml-auto mr-[13px] text-[17px]">15:22:52 UTC</button>
      </div>
    </section>
  );
}

function BottomPanel() {
  return (
    <footer className="mt-[5px] flex h-[46px] shrink-0 items-center rounded-t-md bg-white pl-5 text-[17px] text-[#131313]">
      <div className="flex gap-[39px] font-medium">
        {["Pine Editor", "Strategy Tester", "Replay Trading", "Trading Panel"].map((t) => (
          <button key={t}>{t}</button>
        ))}
      </div>
      <button aria-label="Expand panel" className="ml-auto">
        <ChevronUp size={32} strokeWidth={1} />
      </button>
      <button aria-label="Maximize panel" className="ml-[13px] mr-2">
        <Icon size={32}>
          <path d="M5 11V7.500a2 2 0 0 1 2-2h14a2 2 0 0 1 2 2V11M5 17v3.500a2 2 0 0 0 2 2h14a2 2 0 0 0 2-2V17" />
        </Icon>
      </button>
    </footer>
  );
}

const svgBox = { width: 31, height: 31, viewBox: "0 0 32 32", "aria-hidden": true } as const;

const taskApps: { name: string; running?: boolean; icon: React.ReactNode }[] = [
  {
    name: "Start",
    icon: (
      <svg {...svgBox}>
        <defs>
          <linearGradient id="win" x1="0" y1="0" x2="1" y2="1">
            <stop offset="0" stopColor="#4cc2f8" />
            <stop offset="0.6" stopColor="#1190e6" />
            <stop offset="1" stopColor="#0a72d0" />
          </linearGradient>
        </defs>
        <path d="M1 1h14.500v14.500H1zM16.500 1H31v14.500H16.500zM1 16.500h14.500V31H1zM16.500 16.500H31V31H16.500z" fill="url(#win)" />
      </svg>
    ),
  },
  {
    name: "Search",
    icon: (
      <svg {...svgBox} fill="none" strokeWidth="3">
        <defs>
          <linearGradient id="srch" x1="0" y1="1" x2="1" y2="0">
            <stop offset="0" stopColor="#1570c4" />
            <stop offset="0.6" stopColor="#2c93d8" />
            <stop offset="1" stopColor="#39c785" />
          </linearGradient>
        </defs>
        <circle cx="14" cy="14" r="12" stroke="url(#srch)" />
        <path d="m22.500 22.500 7.500 7.500" stroke="#1976c9" strokeLinecap="round" />
      </svg>
    ),
  },
  {
    name: "Task view",
    icon: (
      <svg {...svgBox}>
        <path d="M1 9.500h23V31H1z" fill="#2b2b2b" />
        <path d="M8.500 1.500H31V22.500H8.500z" fill="#f7f7f7" />
        <path d="M8.500 9.500H24v13H8.500z" fill="#b9b9b9" />
      </svg>
    ),
  },
  {
    name: "Copilot",
    icon: (
      <svg {...svgBox}>
        <defs>
          <linearGradient id="copA" x1="0.7" y1="0" x2="0.2" y2="1">
            <stop offset="0" stopColor="#1a5fe0" />
            <stop offset="0.4" stopColor="#22a6d8" />
            <stop offset="0.7" stopColor="#62b84f" />
            <stop offset="1" stopColor="#f2c01e" />
          </linearGradient>
          <linearGradient id="copB" x1="0.8" y1="0" x2="0.2" y2="1">
            <stop offset="0" stopColor="#a06be8" />
            <stop offset="0.5" stopColor="#ee5d9a" />
            <stop offset="1" stopColor="#fb9350" />
          </linearGradient>
        </defs>
        <path
          d="M10 2h9c3 0 3.500 3 4.500 7h-4c-2.500 0-3.500 1.500-4 3.500L13 20c-.7 2-1.500 3-4 3H6c-5 0-5-4-4-8l2-8c1-3.500 3-5 6-5Z"
          fill="url(#copA)"
        />
        <path
          d="M22 30h-9c-3 0-3.500-3-4.500-7h4c2.500 0 3.500-1.500 4-3.500L19 12c.7-2 1.500-3 4-3h3c5 0 5 4 4 8l-2 8c-1 3.500-3 5-6 5Z"
          fill="url(#copB)"
        />
      </svg>
    ),
  },
  {
    name: "Store",
    icon: (
      <svg {...svgBox}>
        <path d="M10 7V2h13v5" fill="none" stroke="#30b6ef" strokeWidth="2" />
        <path d="M1 5h30v21a5 5 0 0 1-5 5H6a5 5 0 0 1-5-5z" fill="#174f8f" />
        <path d="M10.500 12.500h5.500V18h-5.500z" fill="#f25022" />
        <path d="M17 12.500h5.500V18H17z" fill="#7fba00" />
        <path d="M10.500 19h5.500v5.500h-5.500z" fill="#00a4ef" />
        <path d="M17 19h5.500v5.500H17z" fill="#ffb900" />
      </svg>
    ),
  },
  {
    name: "Amazon",
    icon: (
      <span className="flex h-[29px] w-[27px] flex-col items-center rounded bg-white shadow">
        <b className="text-[21px] leading-[19px] text-[#111]">a</b>
        <svg width="18" height="6" viewBox="0 0 18 6" fill="none" stroke="#f6a21d" strokeWidth="1.6">
          <path d="M1 1.500c4 4 11 4 15.500.5" />
        </svg>
      </span>
    ),
  },
  {
    name: "KakaoTalk",
    icon: (
      <span className="grid h-[30px] w-[30px] place-items-center rounded bg-[#fbe300]">
        <span className="grid h-[19px] w-[24px] place-items-center rounded-full bg-[#3b1d14] text-[8px] font-bold text-[#f9df0b]">
          TALK
        </span>
      </span>
    ),
  },
  {
    name: "Get help",
    icon: (
      <span className="relative grid h-[29px] w-[29px] place-items-center rounded-full border-2 border-white bg-[#1193d4] text-[23px] font-bold leading-none text-white">
        ?
        <span className="absolute -right-2 -top-2 grid h-5 w-5 place-items-center rounded-full bg-[#d13b0c] text-[14px] leading-none">
          !
        </span>
      </span>
    ),
  },
  {
    name: "Stick fight",
    icon: (
      <svg {...svgBox}>
        <rect x="1" y="1" width="30" height="30" rx="2" fill="#ef9a52" />
        <path d="M1 18h30v11a2 2 0 0 1-2 2H3a2 2 0 0 1-2-2z" fill="#cf5a1e" />
        <g stroke="#150c08" strokeWidth="3.4" fill="none" strokeLinecap="round">
          <path d="M8 10l6 9M14 18l9-8 3 2M14 19l2 11M7 12l-3 3 4 4" />
        </g>
        <circle cx="6.500" cy="7.500" r="4" fill="#150c08" />
        <g stroke="#fff" strokeWidth="3.2" fill="none" strokeLinecap="round">
          <path d="M26 9l1 9 2 5-3 7M26 18l-7 5-2 3M25 11l5-3" />
        </g>
        <circle cx="22" cy="5.500" r="4" fill="#fff" />
      </svg>
    ),
  },
  {
    name: "myHP",
    icon: (
      <span className="grid h-[30px] w-[30px] place-items-center rounded-sm bg-[#0a97d5] text-[11px] text-white">
        <span>
          my<b className="italic">hp</b>
        </span>
      </span>
    ),
  },
  {
    name: "Netflix",
    icon: (
      <svg {...svgBox}>
        <path d="M10 5h4v22h-4zM18 5h4v22h-4z" fill="#a90812" />
        <path d="M10 5h4l8 22h-4z" fill="#e50914" />
      </svg>
    ),
  },
  {
    name: "Files",
    icon: (
      <svg {...svgBox}>
        <path d="M1 5c0-1 1-2 2-2h8l3 3h15v6H1z" fill="#d99a15" />
        <path d="M1 9h12l3-3h13c1 0 2 1 2 2v19c0 1-1 2-2 2H3c-1 0-2-1-2-2z" fill="#fbcf4a" />
        <path d="M7 22h18v8H7z" fill="#1879cf" />
        <path d="M11 25.500h10" stroke="#0c4f93" strokeWidth="2" />
      </svg>
    ),
  },
  {
    name: "WPS Office",
    icon: (
      <svg {...svgBox}>
        <rect x="1" y="1" width="30" height="30" rx="4" fill="#fb1f2d" />
        <path d="m6 10 5 13 5-12 5 12 6-13H15" fill="none" stroke="#fff" strokeWidth="2.8" />
      </svg>
    ),
  },
  {
    name: "Edge",
    running: true,
    icon: (
      <svg {...svgBox}>
        <circle cx="16" cy="16" r="15" fill="#1373c2" />
        <path d="M1 17C1 8 8 1 16 1s15 6 15 12c0 5-4 7-8 7-3 0-4-2-3-4 1-5-9-7-13-3-3 2-5 3-6 4Z" fill="#35bfc8" />
        <path d="M22 3c6 2 9 6 9 10 0 5-4 7-8 7-3 0-4-2-3-4 4-2 4-8 2-13Z" fill="#5bd36a" />
        <circle cx="9" cy="20" r="4" fill="#c9c9c9" />
        <path d="M2 31c0-8 14-8 14 0z" fill="#8b8b8b" />
      </svg>
    ),
  },
  {
    name: "Spotify",
    running: true,
    icon: (
      <span className="rounded-full bg-[#0b1a10]">
        <FaSpotify size={29} color="#1ed760" />
      </span>
    ),
  },
  {
    name: "Firefox",
    running: true,
    icon: (
      <svg {...svgBox}>
        <path d="M18 2c2 2 3 3 4 5 5 2 9 6 8 13-1 7-7 11-14 11S2 26 2 18C2 13 4 9 6 6l2 4 4-4 2 3c1-3 2-5 4-7Z" fill="#ff5a3c" />
        <path d="M18 2c2 2 3 3 4 5 5 2 8 7 8 12-2 6-5 8-10 9 6-6 4-14-2-16-1-4-1-7 0-10Z" fill="#ffc22d" />
        <circle cx="15.5" cy="18" r="6.5" fill="#7a3fe0" />
        <path d="M5 14c4-3 8-1 11 1-3 0-4 2-3 4 2 3 6 2 8 0-1 5-5 8-9 6-4-1-7-6-7-11Z" fill="#ff8a2b" />
      </svg>
    ),
  },
  {
    name: "Settings",
    running: true,
    icon: (
      <svg {...svgBox}>
        <g fill="#6d7883">
          <circle cx="16" cy="16" r="11.5" />
          <path d="M12 1h8v30h-8zM1.500 11.500l4-7 25 15-4 7zM5.500 27.500l-4-7 25-15 4 7z" />
        </g>
        <circle cx="16" cy="16" r="7" fill="#fff" />
        <circle cx="16" cy="16" r="5.5" fill="#0a6cb5" />
      </svg>
    ),
  },
  {
    name: "Terminal",
    running: true,
    icon: (
      <svg {...svgBox}>
        <rect x="1" y="4" width="30" height="24" rx="2" fill="#2c2d30" />
        <path d="M1 8V6c0-1 1-2 2-2h26c1 0 2 1 2 2v2z" fill="#77797d" />
        <path d="m6 12 6 5-6 5M15 23h9" fill="none" stroke="#fff" strokeWidth="2.4" />
      </svg>
    ),
  },
  {
    name: "Notepad",
    running: true,
    icon: (
      <svg {...svgBox}>
        <path d="M5 4h23v24H5z" fill="#49c3e8" />
        <path d="M5 28h23v3H5z" fill="#8a5a14" />
        <path d="M8 1v5M12.500 1v5M17 1v5M21.500 1v5M26 1v5" stroke="#10699b" strokeWidth="1.8" />
        <path d="M9 11h15M9 16h15M9 21h15" stroke="#0b5d8c" strokeWidth="2" />
      </svg>
    ),
  },
];

function Taskbar() {
  return (
    <div className="flex h-[60px] items-center border-t border-[#adadad] bg-gradient-to-r from-[#dcdee3] via-[#e7dfdf] to-[#d8d8d8] font-['Open_Sans','Noto_Sans',sans-serif] text-[#1a1a1a]">
      <div className="flex w-[409px] items-center">
        <button aria-label="Widgets, 5 updates" className="relative ml-[26px]">
          <svg width="30" height="30" viewBox="0 0 30 30" aria-hidden="true">
            <path d="m2 12 20 2 2 8-18 8z" fill="#0a5c9e" />
            <path d="M12 3h15v17a3 3 0 0 1-3 3H8z" fill="#29b4e8" />
            <rect x="0" y="7" width="20" height="15" rx="3" fill="#1489d8" />
            <circle cx="10" cy="14" r="6" fill="#fff" />
            <path d="M19 13h8M19 17h7" stroke="#fff" strokeWidth="2" />
          </svg>
          <span className="absolute -right-[7px] -top-2 grid h-5 w-5 place-items-center rounded-full bg-[#c42b1c] text-[13px] leading-none text-white">
            5
          </span>
        </button>
      </div>
      <div className="flex h-full">
        {taskApps.map((a) => (
          <button key={a.name} aria-label={a.name} className="relative grid w-[55px] place-items-center">
            {a.icon}
            {a.running && <i className="absolute bottom-1 h-1 w-2 rounded-full bg-[#7c7c7c]" />}
          </button>
        ))}
        <button
          aria-label="Chrome"
          className="relative ml-1 mt-1.5 grid h-[48px] w-[48px] place-items-center rounded-md bg-[#f1f1f1]"
        >
          <svg width="30" height="30" viewBox="0 0 32 32" aria-hidden="true">
            <path d="M16 16 3 8.500a15 15 0 0 1 26 0z" fill="#e33b2e" />
            <path d="M16 16 29 8.500A15 15 0 0 1 16 31z" fill="#fbbc14" />
            <path d="M16 16v15A15 15 0 0 1 3 8.500z" fill="#279847" />
            <circle cx="16" cy="16" r="7.5" fill="#fff" />
            <circle cx="16" cy="16" r="5.8" fill="#1a73e8" />
          </svg>
          <span className="absolute right-[3px] top-[3px] grid h-5 w-5 place-items-center rounded-full bg-[#ec6a05] text-[11px] leading-none text-white">
            N
          </span>
          <i className="absolute bottom-0 h-1 w-5 rounded-full bg-[#b85a06]" />
        </button>
      </div>
      <div className="ml-auto mr-[24px] flex items-center">
        <button aria-label="Hidden icons">
          <ChevronUp size={19} strokeWidth={1.8} />
        </button>
        <svg width="24" height="22" viewBox="0 0 24 22" fill="none" stroke="#1a1a1a" strokeWidth="1.5" className="ml-[18px]">
          <path d="M7 17h11a4 4 0 0 0 .5-8 6.500 6.500 0 0 0-12-1A4.500 4.500 0 0 0 7 17Z" fill="#b5b5b5" />
          <path d="M3 3 21 20" />
        </svg>
        <p className="ml-[22px] text-center text-[14px] leading-5">
          ENG
          <br />
          US
        </p>
        <button aria-label="Network, volume and battery" className="ml-[20px] flex items-center gap-[9px]">
          <Wifi size={21} strokeWidth={1.7} />
          <Volume2 size={21} strokeWidth={1.5} />
          <svg width="21" height="20" viewBox="0 0 21 20" aria-hidden="true">
            <rect x="2" y="5" width="16" height="11" rx="2" fill="none" stroke="#1a1a1a" strokeWidth="1.5" />
            <path d="M6 8h10v6H4v-3zM18.500 8.500h1.500v4h-1.500z" fill="#1a1a1a" />
            <path d="M6 0 1 7h4l-1 5 5-7H5z" fill="#1a1a1a" />
          </svg>
        </button>
        <p className="ml-[23px] text-right text-[14px] leading-5">
          10:22 AM
          <br />
          7/15/2025
        </p>
      </div>
    </div>
  );
}

export default function App() {
  return (
    <div className="flex h-screen flex-col overflow-hidden bg-white">
      <BrowserChrome />
      <main className="flex min-h-0 flex-1 flex-col bg-[#ebebeb] font-['Open_Sans','Noto_Sans',sans-serif]">
        <TopToolbar />
        <div className="mt-1 flex min-h-0 flex-1 gap-[5px]">
          <LeftToolbar />
          <div className="flex min-w-0 flex-1 flex-col">
            <ChartPanel />
            <BottomPanel />
          </div>
          <RightToolbar />
        </div>
      </main>
      <Taskbar />
    </div>
  );
}
